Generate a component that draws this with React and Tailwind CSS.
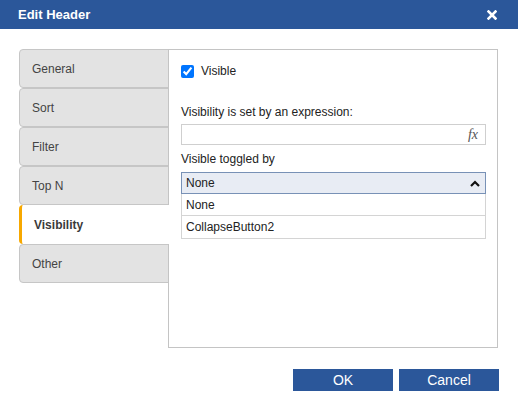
import React from "react";

const tabs = ["General", "Sort", "Filter", "Top N", "Visibility", "Other"];

const Tab = ({ label, active }) => {
  if (active) {
    return (
      <div className="relative z-10 h-[39px] w-[150px] flex items-center pl-[12px] pt-[1px] bg-white border-l-[3px] border-l-[#f7a800] rounded-l-[4px] font-bold text-[#3a3a3a]">
        {label}
      </div>
    );
  }
  return (
    <div className="h-[39px] w-[150px] flex items-center pl-[12px] pt-[1px] bg-[#e3e3e3] border border-[#c6c6c6] rounded-l-[4px] text-[#444]">
      {label}
    </div>
  );
};

export default function App() {
  return (
    <div
      className="w-[518px] h-[405px] bg-white flex flex-col text-[12px] text-[#222]"
      style={{ fontFamily: '"Liberation Sans", Arial, sans-serif' }}
    >
      <div className="h-[29px] bg-[#2b579a] flex items-center justify-between pl-[18px] pr-[21px] text-white font-bold text-[13px]">
        <span>Edit Header</span>
        <svg width="10" height="10" viewBox="0 0 10 10">
          <path d="M1.5 1.5 L8.5 8.5 M8.5 1.5 L1.5 8.5" stroke="#fff" strokeWidth="2.6" strokeLinecap="square" />
        </svg>
      </div>

      <div className="flex pt-[20px] pl-[19px]">
        <div className="flex flex-col w-[150px]">
          {tabs.map((t) => (
            <Tab key={t} label={t} active={t === "Visibility"} />
          ))}
        </div>

        <div className="ml-[-1px] w-[330px] h-[299px] border border-[#c4c4c4] pl-[12px] pr-[11px] flex flex-col">
          <label className="flex items-center gap-[7px] mt-[14px] h-[14px]">
            <input type="checkbox" checked readOnly className="w-[13px] h-[13px] m-0 accent-[#0075ff]" />
            <span>Visible</span>
          </label>

          <div className="mt-[26px] leading-4">Visibility is set by an expression:</div>
          <div className="mt-[4px] h-[21px] border border-[#cfcfcf] flex items-center justify-end pr-[7px]">
            <span className="italic text-[#555] text-[14px]" style={{ fontFamily: '"Liberation Serif", "Times New Roman", serif' }}>
              fx
            </span>
          </div>

          <div className="mt-[6px] leading-4">Visible toggled by</div>
          <div className="mt-[5px] h-[22px] border border-[#7891b6] bg-[#e8ecf4] flex items-center justify-between pl-[4px] pr-[5px]">
            <span>None</span>
            <svg width="10" height="7" viewBox="0 0 10 7">
              <path d="M1 6 L5 2 L9 6" fill="none" stroke="#111" strokeWidth="2.2" />
            </svg>
          </div>
          <div className="flex flex-col border border-t-0 border-[#d4d4d4]">
            <div className="h-[22px] flex items-center pl-[4px] border-b border-[#d4d4d4]">None</div>
            <div className="h-[22px] flex items-center pl-[4px]">CollapseButton2</div>
          </div>
        </div>
      </div>

      <div className="flex justify-end gap-[6px] mt-[21px] pr-[19px]">
        <button className="w-[100px] h-[22px] bg-[#2b579a] text-white text-[14px] leading-none">OK</button>
        <button className="w-[100px] h-[22px] bg-[#2b579a] text-white text-[14px] leading-none">Cancel</button>
      </div>
    </div>
  );
}
